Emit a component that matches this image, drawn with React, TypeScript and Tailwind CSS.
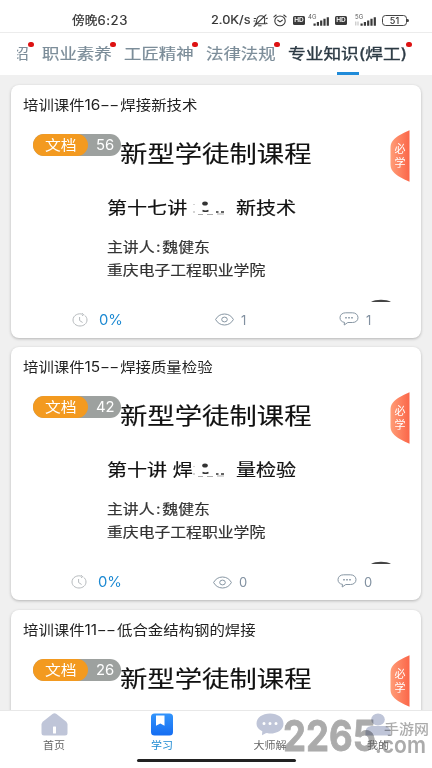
import React from 'react';
import clsx from 'clsx';

type Course = {
  title: string;
  topic: string;
  count: number;
  lessonStart: string;
  lessonEnd: string;
  views: number;
  comments: number;
};

const courses: Course[] = [
  { title: '培训课件16', topic: '焊接新技术', count: 56, lessonStart: '第十七讲', lessonEnd: '新技术', views: 1, comments: 1 },
  { title: '培训课件15', topic: '焊接质量检验', count: 42, lessonStart: '第十讲 焊', lessonEnd: '量检验', views: 0, comments: 0 },
  { title: '培训课件11', topic: '低合金结构钢的焊接', count: 26, lessonStart: '', lessonEnd: '', views: 0, comments: 0 },
];

const tabs = [
  { label: '职业素养', width: 'w-[82px]' },
  { label: '工匠精神', width: 'w-[81.5px]' },
  { label: '法律法规', width: 'w-[82.5px]' },
  { label: '专业知识(焊工)', width: 'w-[122px]', active: true },
];

// Text set slightly wider than the font draws it
const Wide: React.FC<{ className?: string; children: React.ReactNode }> = ({ className, children }) => (
  <span className={clsx('block origin-left whitespace-nowrap', className)}>{children}</span>
);

const MutedBell = () => (
  <svg width="15" height="13" viewBox="0 0 15 13" fill="none" stroke="#3a3a3a" strokeWidth="1.1" strokeLinecap="round">
    <path d="M2.500 9.800h9.500c-1-1-.6-2.300-.3-3.900C12.200 3.500 10.500 1.700 8 1.700S4.300 3.500 3.800 5.900c-.3 1.600-.3 2.900-1.300 3.900Z" />
    <path d="M5.500 11.800h2.600M1 12.300 13 .8M1.200 4.500h1.500M13.300 4.500l1-.3M12.800 9l1.200.6M1 7h1" />
  </svg>
);

const AlarmClock = () => (
  <svg width="14" height="13" viewBox="0 0 14 13" fill="none" stroke="#3a3a3a" strokeWidth="1.1" strokeLinecap="round">
    <ellipse cx="7" cy="6.900" rx="5.200" ry="4.900" />
    <path d="M4.800 6.200 7 7.900l2.300-1.700M.9 2.900 3.200 1M13.100 2.900 10.800 1" />
  </svg>
);

const HdBadge = () => (
  <span className="flex h-[9px] w-[12px] items-center justify-center rounded-[1.5px] bg-[#3a3a3a] text-[6.5px] leading-none font-semibold text-white">
    HD
  </span>
);

const Signal: React.FC<{ label: string; data?: boolean }> = ({ label, data }) => (
  <span className="relative block h-[13px] w-[22px]">
    <span className="absolute top-0 left-0 text-[6px] leading-[6px] text-[#555]">{label}</span>
    <svg className="absolute top-0 left-0" width="22" height="13" viewBox="0 0 22 13">
      <path d="M5.500 9.500h2.200v2.300H5.500zM8.800 8H11v3.800H8.800zM12.100 6.500h2.200v5.300h-2.200zM15.400 4.800h2.200v7h-2.200zM18.700 3.200h2.200v8.600h-2.200z" fill="#3a3a3a" />
      {data && <path d="M.8 7.500v4M3 7.500v4" stroke="#aaa" strokeWidth=".8" />}
    </svg>
  </span>
);

const StatusBar = () => (
  <div className="flex h-[33px] items-center border-b border-[#ececec] pt-[9px] text-[#333]">
    <div className="ml-[72px] w-[139px] pt-px text-[12px] [-webkit-text-stroke:0.2px_#333]">
      <Wide className="scale-x-106">傍晚<span className="text-[12.5px] tracking-[0.5px]">6:23</span></Wide>
    </div>
    <div className="w-[42px] text-[11.5px] [-webkit-text-stroke:0.2px_#333]">
      <Wide className="scale-x-112">2.0K/s</Wide>
    </div>
    <MutedBell />
    <div className="ml-[5px]"><AlarmClock /></div>
    <div className="ml-[6px]"><HdBadge /></div>
    <div className="ml-[3px]"><Signal label="4G" /></div>
    <div className="ml-[5px]"><HdBadge /></div>
    <div className="ml-[8px]"><Signal label="5G" data /></div>
    <div className="ml-[5px] flex h-[11px] w-[25px] items-center justify-center rounded-[3.5px] border-[1.5px] border-[#444] text-[9px] leading-none font-medium">
      51
    </div>
    <span className="h-[3px] w-[2px] rounded-r bg-[#444]" />
  </div>
);

const Dot = ({ className }: { className: string }) => (
  <span className={clsx('absolute top-[-4px] h-[5px] w-[6px] rounded-full bg-[#dd1212]', className)} />
);

const TabBar = () => (
  <div className="flex h-[42px] bg-white pt-[13px] pl-[17px] text-[15px] leading-[15px] text-[#7c8d99]">
    <div className="relative w-[25px]">
      <div className="flex h-[17px] w-[12px] justify-end overflow-hidden">
        <span className="block origin-right scale-x-116">绍</span>
      </div>
      <Dot className="left-[11px]" />
    </div>
    {tabs.map((tab) => (
      <div key={tab.label} className={clsx('relative', tab.width, tab.active ? 'text-[#2c3a44] [-webkit-text-stroke:0.35px_#2c3a44]' : '[-webkit-text-stroke:0.2px_#7c8d99]')}>
        <Wide className={tab.active ? 'scale-x-118' : 'scale-x-116'}>{tab.label}</Wide>
        <Dot className={tab.active ? 'left-[118px]' : 'left-[68px]'} />
        {tab.active && <span className="absolute top-[26px] left-[49px] h-[3px] w-[22px] bg-[#208bd9]" />}
      </div>
    ))}
  </div>
);

const RequiredTag = () => (
  <div className="relative h-[52px] w-[20px] text-[11px] leading-[14px] text-white">
    <svg className="absolute inset-0" width="20" height="52" viewBox="0 0 20 52">
      <defs>
        <linearGradient id="tag" x1="0" y1="0" x2="1" y2="0">
          <stop offset="0" stopColor="#ff9d77" />
          <stop offset="1" stopColor="#fb6649" />
        </linearGradient>
      </defs>
      <path d="M19.500.3v51.400C14 49.500 6 45.500 3 41.500 1 39 .5 37 .5 34V18c0-3 .5-5 2.500-7.500C6 6.500 14 2.500 19.500.3Z" fill="url(#tag)" />
    </svg>
    <div className="relative flex flex-col items-center pt-[12px]">
      <span>必</span>
      <span>学</span>
    </div>
  </div>
);

const Clock = () => (
  <svg width="16" height="14" viewBox="0 0 16 14" fill="none" stroke="#b6babd" strokeWidth="1">
    <path d="M10.500 1.300C6.500-.3 1 2.200 1 7c0 3.400 3.100 6 7 6s7-2.600 7-6c0-2-.9-3.600-2.400-4.700M10.200.2l1.500 1.500-1.700 1M7.600 4v3.500l3 2" />
  </svg>
);

const Eye = () => (
  <svg width="19" height="13" viewBox="0 0 19 13" fill="none" stroke="#8796a3" strokeWidth="1">
    <path d="M.6 6.500C2.300 3.200 5.500 1 9.500 1s7.200 2.200 8.900 5.500C16.700 9.800 13.500 12 9.500 12S2.300 9.800.6 6.500Z" />
    <ellipse cx="9.500" cy="6.500" rx="2.800" ry="2.400" />
  </svg>
);

const Bubble = () => (
  <svg className="mb-[2px]" width="20" height="14" viewBox="0 0 20 14" fill="none" stroke="#8796a3" strokeWidth="1">
    <path d="M6.500.8h7c3.200 0 5.500 2 5.500 4.900s-2.300 4.800-5.500 4.800H8.800L5.200 13l.3-2.600C2.700 10 1 8.200 1 5.700 1 2.800 3.300.8 6.500.8Z" />
    <path d="M6.200 5.800h1.600M9.200 5.800h1.600M12.200 5.800h1.600" strokeWidth="1.500" />
  </svg>
);

// Leftover strokes of the half erased words in the slide heading
const Smudge = () => (
  <svg width="34" height="16" viewBox="0 0 34 16" fill="none" stroke="#333">
    <path d="M1 4v1M1 11v2M5 14.500h5M14 14.500h6M24 14h7" stroke="#aaa" />
    <ellipse cx="12" cy="3.500" rx="2.800" ry="2" fill="#333" stroke="none" />
    <path d="M9.500 10.500q3 1.500 6 0M23 12h2.500M28 12h3" strokeWidth="1.500" />
  </svg>
);

const Slide: React.FC<{ course: Course }> = ({ course }) => (
  <div className="relative h-[185px] overflow-hidden">
    <div className="pt-[21px] pl-[96px] text-[#111] blur-[0.6px]">
      <Wide className="ml-[13px] scale-x-119 text-[23px] leading-[28px] [-webkit-text-stroke:0.15px_#111]">新型学徒制课程</Wide>
      {course.lessonStart && (
        <>
          <div className="mt-[31px] flex h-[18px] items-center text-[17px] leading-[18px] [-webkit-text-stroke:0.2px_#111]">
            <div className="w-[86px]"><Wide className="scale-x-118">{course.lessonStart}</Wide></div>
            <Smudge />
            <Wide className="ml-[9px] scale-x-118">{course.lessonEnd}</Wide>
          </div>
          <Wide className="mt-[18px] scale-x-113 text-[14px] leading-[23px] text-[#333] [-webkit-text-stroke:0.2px_#333]">
            主讲人<span className="inline-block w-[7px] text-center">:</span>魏健东
          </Wide>
          <Wide className="scale-x-113 text-[14px] leading-[23px] text-[#333] [-webkit-text-stroke:0.2px_#333]">重庆电子工程职业学院</Wide>
        </>
      )}
    </div>
    <div className="absolute top-[15px] left-[22px] flex h-[22px] w-[88px] items-center rounded-full bg-[#9da19f] text-[14px] leading-none text-white">
      <div className="h-full w-[55px] rounded-full bg-[#f39a20] pl-[12px]">
        <Wide className="scale-x-113 leading-[22px]">文档</Wide>
      </div>
      <div className="ml-[8px]"><Wide className="scale-x-106">{course.count}</Wide></div>
    </div>
    <div className="absolute top-[11px] left-[379px]"><RequiredTag /></div>
    <svg className="absolute top-[180px] left-[360px] blur-[0.4px]" width="20" height="3" viewBox="0 0 20 3">
      <path d="M0 3C4 0 16 0 20 3Z" fill="#444" />
    </svg>
  </div>
);

const CourseCard: React.FC<{ course: Course }> = ({ course }) => (
  <div className="h-[253px] shrink-0 rounded-[8px] bg-white shadow-[0_1px_3px_rgba(0,0,0,0.25)]">
    <div className="h-[34px] pt-[10px] pl-[12px] text-[14px] leading-[20px] text-[#222]">
      <Wide className="scale-x-110">
        {course.title}
        <span className="mr-[2px] inline-block origin-left scale-x-140 pr-[4px] tracking-[-0.4px]">--</span>
        {course.topic}
      </Wide>
    </div>
    <Slide course={course} />
    <div className={clsx('flex items-center pt-[6px] text-[13px] leading-[20px] text-[#8190a0]', course.views ? 'pl-[61px]' : 'pl-[60px]')}>
      <Clock />
      <div className={clsx('ml-[11px] text-[14px] text-[#1c89d2]', course.views ? 'w-[116px]' : 'w-[115px]')}><Wide className="scale-x-106">0%</Wide></div>
      <Eye />
      <span className="ml-[7px] w-[98px]">{course.views}</span>
      <Bubble />
      <span className="ml-[7px]">{course.comments}</span>
    </div>
  </div>
);

const HomeIcon = () => (
  <svg width="27" height="23" viewBox="0 0 27 23">
    <path d="M11.500 1Q13.500-.5 15.500 1L25 8.500Q26.500 9.800 26.500 11.500V20Q26.500 22.500 24 22.500H3Q.5 22.500.5 20V11.500Q.5 9.800 2 8.500Z" fill="#bfc5d8" />
    <rect x="12" y="13.500" width="3" height="7" rx=".5" fill="#fff" />
  </svg>
);

const StudyIcon = () => (
  <svg width="22" height="23" viewBox="0 0 22 23">
    <defs>
      <linearGradient id="study" x1="0" y1="0" x2="0" y2="1">
        <stop offset="0" stopColor="#3294fb" />
        <stop offset="1" stopColor="#156df2" />
      </linearGradient>
    </defs>
    <rect y=".5" width="22" height="22" rx="3.500" fill="url(#study)" />
    <path d="M5 2.500h8.500v10.300L9.300 10.500 5 12.800Z" fill="#fff" />
  </svg>
);

const MasterIcon = () => (
  <svg width="28" height="23" viewBox="0 0 28 23">
    <path d="M14 .5c7.700 0 13.500 4.200 13.500 10.200S21.700 20.500 14 20.500c-1.500 0-2.500 0-3.800-.4L6 22.300l.3-4C2.500 16.500.5 14 .5 10.700.5 4.700 6.300.5 14 .5Z" fill="#bfc5d8" />
    <path d="M8 10.500h.01M14 10.500h.01M20 10.500h.01" stroke="#fff" strokeWidth="3" strokeLinecap="round" />
  </svg>
);

const MeIcon = () => (
  <svg width="26" height="23" viewBox="0 0 26 23">
    <ellipse cx="13" cy="6.500" rx="6.800" ry="6" fill="#bfc5d8" />
    <path d="M.5 22.500V19c0-4 3-6 7-6h11c4 0 7 2 7 6v3.500Z" fill="#bfc5d8" />
  </svg>
);

const navItems = [
  { label: '首页', icon: <HomeIcon /> },
  { label: '学习', icon: <StudyIcon />, active: true },
  { label: '大师解', icon: <MasterIcon /> },
  { label: '我的', icon: <MeIcon /> },
];

const Watermark = () => (
  <div className="absolute top-[4px] left-[283px] flex text-[#a3a3a3] opacity-90">
    <div className="w-[94px] text-[42px] leading-[42px] font-bold">
      <Wide className="scale-x-87 [-webkit-text-stroke:0.8px_#a3a3a3]">2265</Wide>
    </div>
    <div className="pt-[6px]">
      <Wide className="ml-[7px] scale-x-107 text-[14px] leading-[16px] font-medium">手游网</Wide>
      <Wide className="mt-[-3px] ml-[-2px] scale-x-88 text-[24px] leading-[21px] font-semibold">.com</Wide>
    </div>
  </div>
);

const BottomNav = () => (
  <div className="relative h-[58px] shrink-0 border-t border-[#e8e8e8] bg-white">
    <Watermark />
    <div className="relative grid grid-cols-4 pt-[2px]">
      {navItems.map((item) => (
        <div key={item.label} className="flex flex-col items-center">
          <div className="mix-blend-multiply">{item.icon}</div>
          <span className={clsx('mt-[2px] scale-x-110 text-[10px] leading-[15px]', item.active ? 'text-[#1c89d2]' : 'text-[#666]')}>
            {item.label}
          </span>
        </div>
      ))}
    </div>
    <div className="mx-auto mt-[6px] h-[3px] w-[159px] rounded-full bg-[#222]" />
  </div>
);

const App: React.FC = () => {
  return (
    <div className="flex h-[768px] w-[432px] flex-col overflow-hidden bg-white font-[Inter,'Noto_Sans_CJK_SC',sans-serif]">
      <StatusBar />
      <TabBar />
      <div className="flex min-h-0 flex-1 flex-col gap-[9.5px] overflow-hidden bg-[#f0f0f0] px-[11px] pt-[9.6px]">
        {courses.map((course) => (
          <CourseCard key={course.title} course={course} />
        ))}
      </div>
      <BottomNav />
    </div>
  );
};

export default App;
